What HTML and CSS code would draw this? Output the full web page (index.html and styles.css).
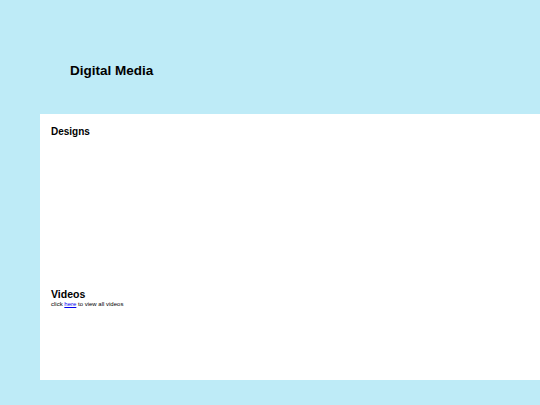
FILE: index.html
```html
<!doctype html>
<html lang="en">

<head>
  <title>Digital Media</title>
  <link rel="stylesheet" href="styles.css">
</head>

<body>
  <div id="head">
    <h1>Digital Media</h1>
  </div>

  <div class="mainBody">
    <div class="designs">
      <h2>Designs</h2>
    </div>

    <div class="videos">
      <h2>Videos</h2>
      <p>click <a href="#">here</a> to view all videos</p>
    </div>
  </div>
</body>

</html>
```
FILE: styles.css
```css
body {
  font-family: "Liberation Sans", Arial, sans-serif;
  margin: 0;
  background-color: #beebf7;
  color: #000;
}

#head {
  height: 114px;
  box-sizing: border-box;
  padding-top: 63px;
  padding-left: 70px;
}

#head h1 {
  margin: 0;
  font-size: 13.5px;
  line-height: 16px;
}

.mainBody {
  margin-left: 40px;
  height: 266px;
  box-sizing: border-box;
  padding: 12px 11px 0;
  background-color: #fff;
}

.mainBody h2 {
  margin: 0;
  font-size: 10px;
  line-height: 12px;
}

.designs {
  height: 162px;
}

.videos h2 {
  font-size: 10.5px;
}

.videos p {
  margin: 1px 0 0;
  font-size: 6px;
  line-height: 7px;
}

.videos a {
  color: #0000ee;
}
```
